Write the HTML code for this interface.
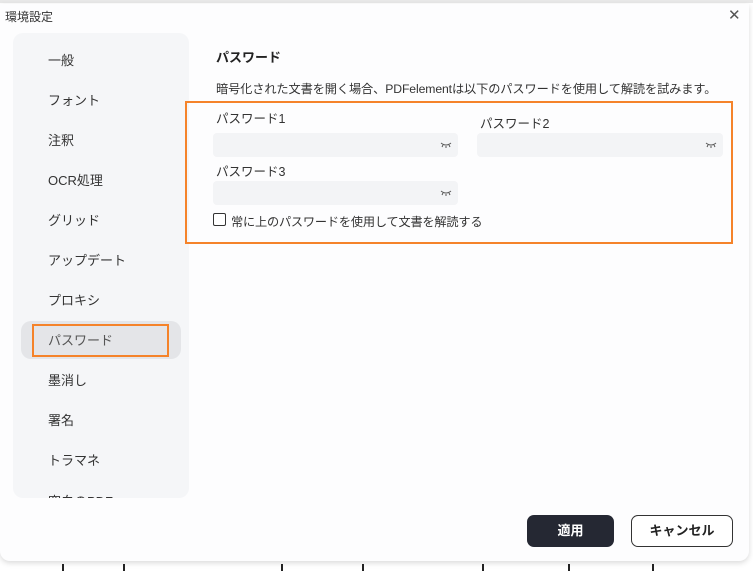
<!DOCTYPE html>
<html><head><meta charset="utf-8"><style>
*{margin:0;padding:0;box-sizing:border-box}
body{width:753px;height:571px;background:#fff;position:relative;overflow:hidden;font-family:"Liberation Sans","Noto Sans CJK JP",sans-serif;color:#222;font-size:13px}
.a{position:absolute}
.dlg{left:0;top:4px;width:749px;height:557px;background:#fdfdfe;border-radius:0 0 10px 10px;box-shadow:0 2px 6px rgba(0,0,0,.15)}
.side{left:13px;top:33px;width:176px;height:465px;background:#f5f6f8;border-radius:10px;overflow:hidden}
.it{position:absolute;left:35px;font-size:13px;color:#333}
.inp{background:#f3f4f6;border-radius:4px;height:24px}
.eye{position:absolute;right:6px;top:8px;width:12px;height:8px}
.lbl{font-size:12.5px;color:#333}
.tick{position:absolute;top:564px;width:2px;height:7px;background:#222}
</style></head><body>
<div class="a" style="left:0;top:0;width:753px;height:3px;background:#e8e8e8"></div>
<div class="a dlg"></div>
<div class="a" style="left:5px;top:8px;font-size:12px;color:#333">環境設定</div>
<div class="a" style="left:728px;top:6px;font-size:15px;color:#555;font-weight:300">✕</div>
<div class="a side">
<div class="it" style="top:17px">一般</div>
<div class="it" style="top:57px">フォント</div>
<div class="it" style="top:97px">注釈</div>
<div class="it" style="top:137px">OCR処理</div>
<div class="it" style="top:177px">グリッド</div>
<div class="it" style="top:217px">アップデート</div>
<div class="it" style="top:257px">プロキシ</div>
<div style="position:absolute;left:8px;top:288px;width:160px;height:38px;background:#e4e5e8;border-radius:10px"></div>
<div style="position:absolute;left:19px;top:291px;width:137px;height:33px;border:2px solid #f5832a"></div>
<div class="it" style="top:297px;color:#555">パスワード</div>
<div class="it" style="top:337px">墨消し</div>
<div class="it" style="top:377px">署名</div>
<div class="it" style="top:417px">トラマネ</div>
<div class="it" style="top:458px">空白のPDF</div>
</div>
<div class="a" style="left:216px;top:47px;font-weight:bold;font-size:13px">パスワード</div>
<div class="a" style="left:216px;top:79px;font-size:12.2px;color:#333;letter-spacing:-0.1px">暗号化された文書を開く場合、PDFelementは以下のパスワードを使用して解読を試みます。</div>
<div class="a" style="left:185px;top:101px;width:548px;height:143px;border:2px solid #f5832a"></div>
<div class="a lbl" style="left:216px;top:108px">パスワード1</div>
<div class="a lbl" style="left:480px;top:113px">パスワード2</div>
<div class="a lbl" style="left:216px;top:161px">パスワード3</div>
<div class="a inp" style="left:213px;top:133px;width:245px"><svg class="eye" viewBox="0 0 12 8"><path d="M1 2q5 4 10 0M3 4l-1 2M6 5v2M9 4l1 2" stroke="#555" fill="none" stroke-width="1"/></svg></div>
<div class="a inp" style="left:477px;top:133px;width:246px"><svg class="eye" viewBox="0 0 12 8"><path d="M1 2q5 4 10 0M3 4l-1 2M6 5v2M9 4l1 2" stroke="#555" fill="none" stroke-width="1"/></svg></div>
<div class="a inp" style="left:213px;top:181px;width:245px"><svg class="eye" viewBox="0 0 12 8"><path d="M1 2q5 4 10 0M3 4l-1 2M6 5v2M9 4l1 2" stroke="#555" fill="none" stroke-width="1"/></svg></div>
<div class="a" style="left:213px;top:213px;width:13px;height:13px;border:1px solid #333;border-radius:2px;background:#fff"></div>
<div class="a" style="left:231px;top:212px;font-size:12.2px;color:#333;letter-spacing:-0.2px">常に上のパスワードを使用して文書を解読する</div>
<div class="a" style="left:527px;top:515px;width:87px;height:32px;background:#252833;border-radius:7px;color:#fff;font-weight:bold;font-size:13px;text-align:center;line-height:32px">適用</div>
<div class="a" style="left:631px;top:515px;width:102px;height:32px;border:1px solid #333;border-radius:7px;background:#fff;font-weight:bold;font-size:13px;text-align:center;line-height:30px">キャンセル</div>
<div class="tick" style="left:62px"></div><div class="tick" style="left:123px"></div><div class="tick" style="left:281px"></div><div class="tick" style="left:362px"></div><div class="tick" style="left:482px"></div><div class="tick" style="left:568px"></div><div class="tick" style="left:652px"></div>
</body></html>
